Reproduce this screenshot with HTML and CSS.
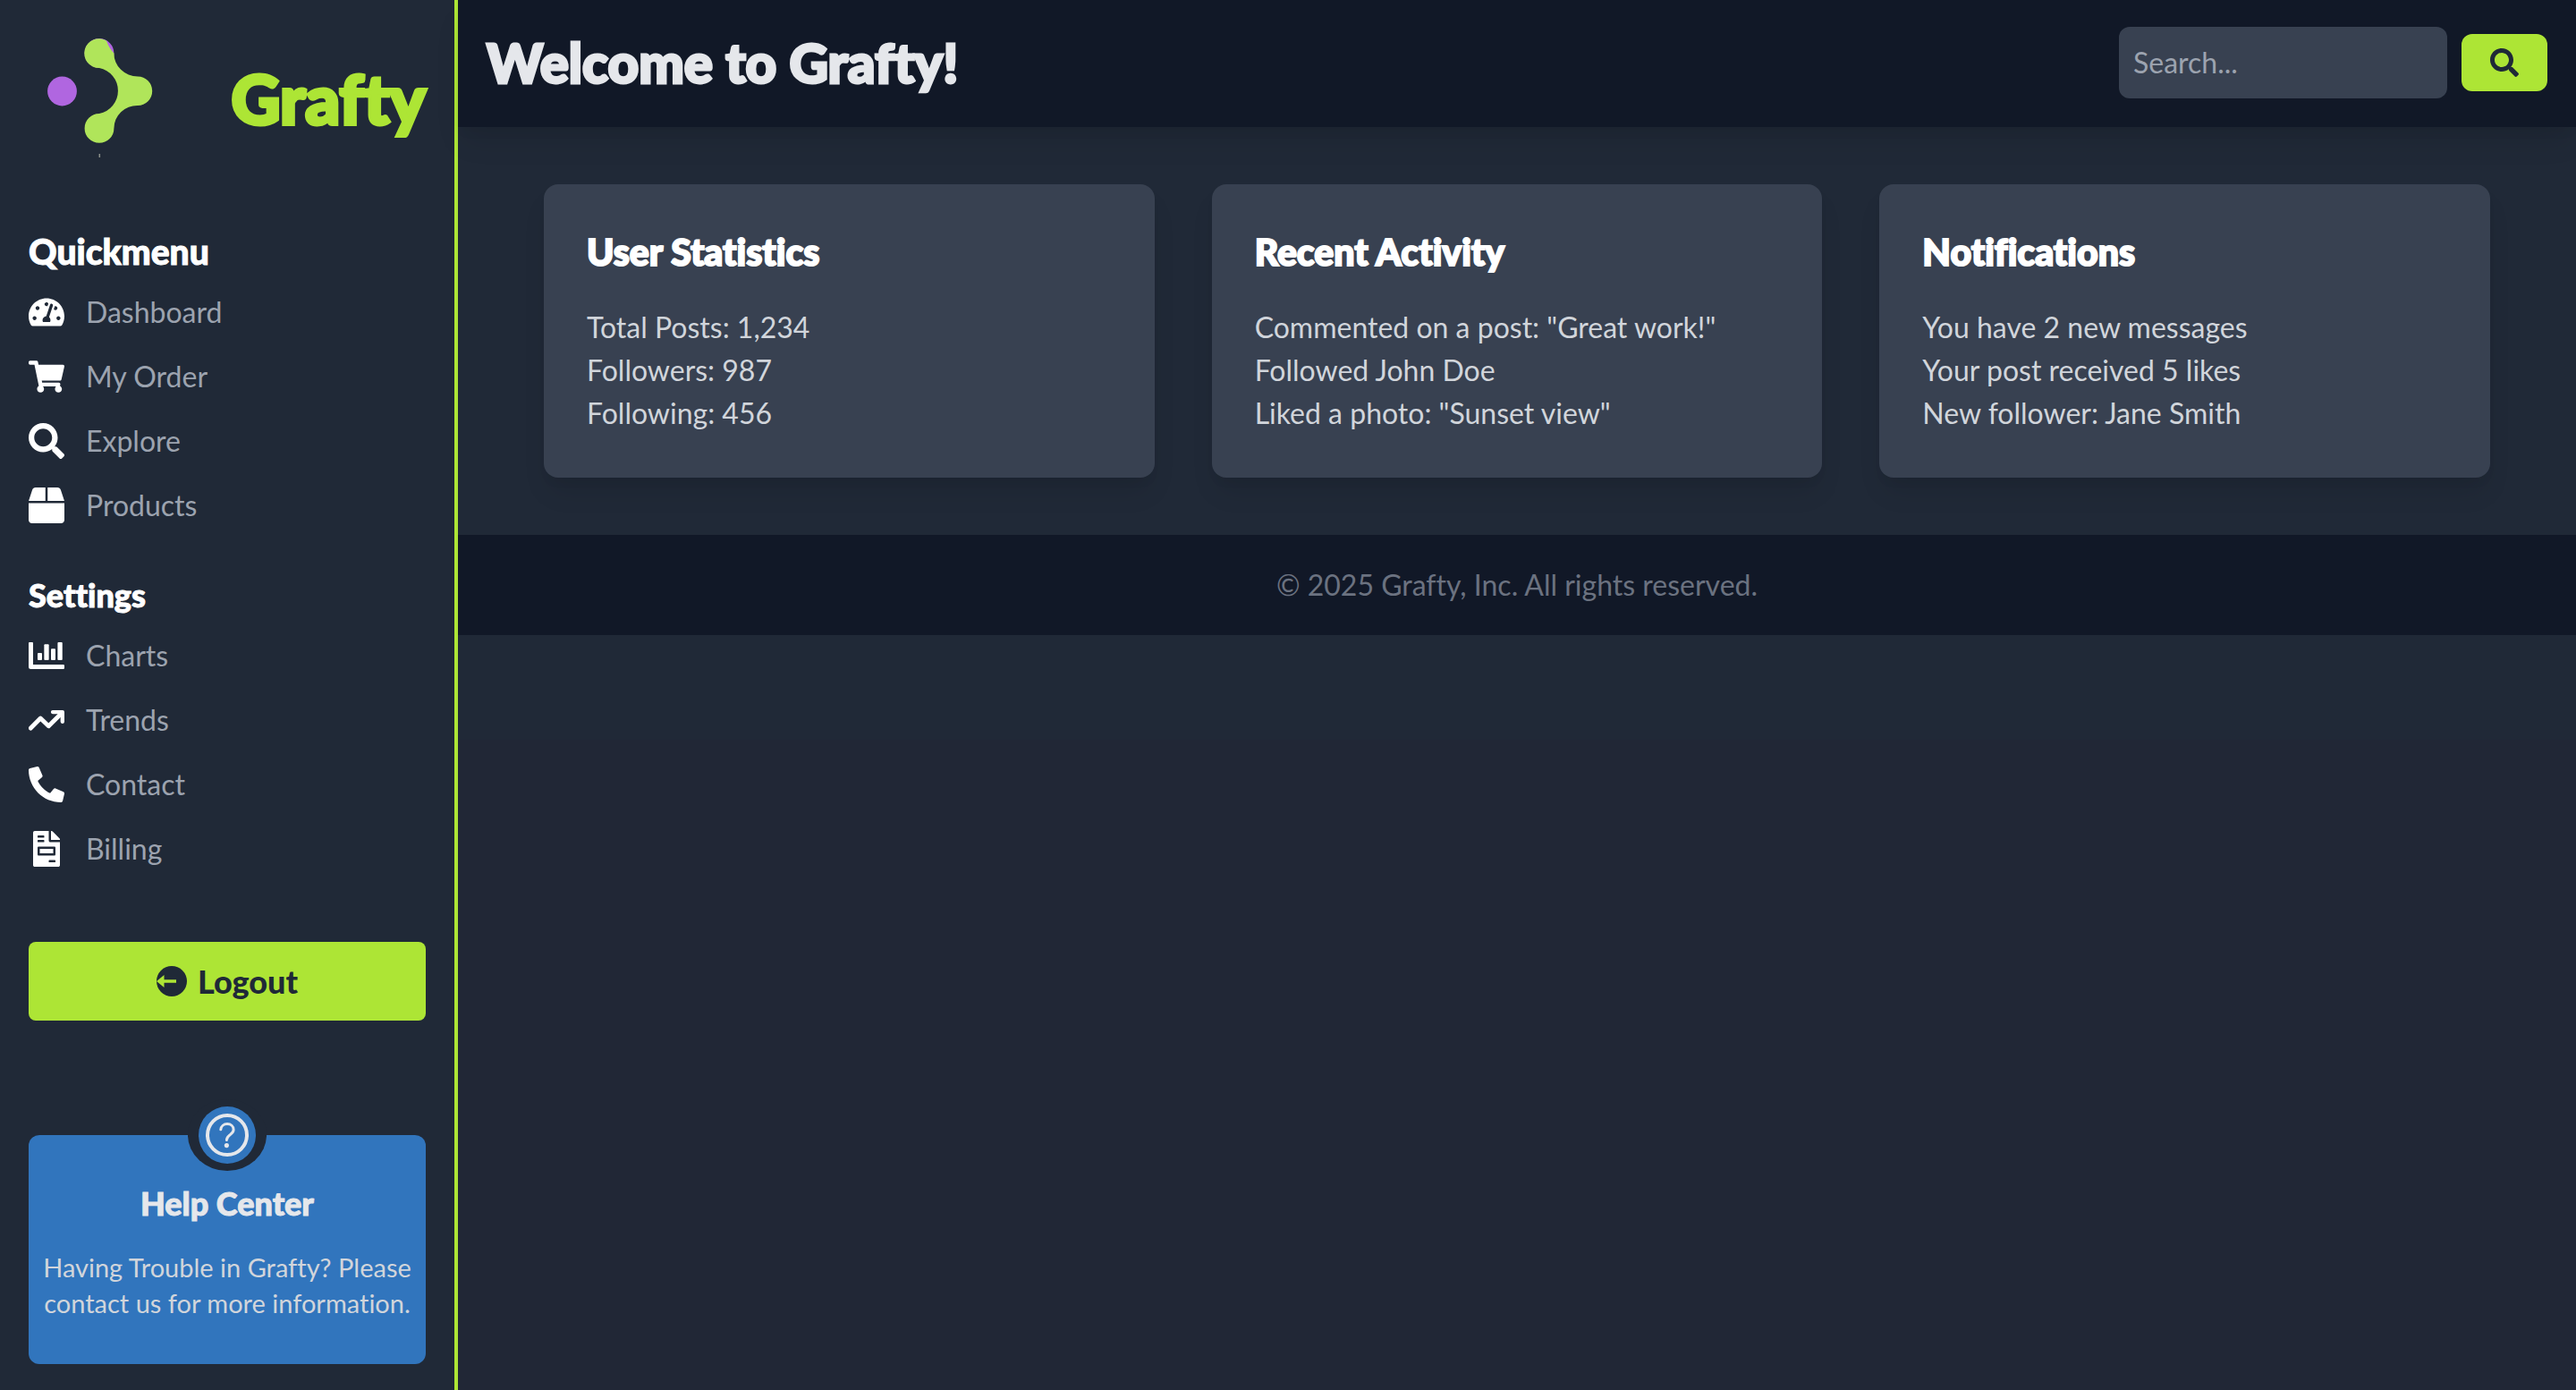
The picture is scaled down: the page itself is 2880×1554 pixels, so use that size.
FILE: index.html
```html
<!DOCTYPE html>
<html lang="en">
<head>
<meta charset="utf-8">
<meta name="viewport" content="width=device-width, initial-scale=1">
<title>Grafty</title>
<link rel="stylesheet" href="styles.css">
</head>
<body>
<div class="app">
  <aside class="sidebar">
    <div class="brand">
      <svg class="brand-logo" viewBox="32 30 160 160" aria-hidden="true">
        <circle cx="69.5" cy="102" r="16.4" fill="#b066e0"/>
        <circle cx="111" cy="59.5" r="16.4" fill="#b066e0"/>
        <path fill="#b0e55a" d="M119 45.5A16.4 16.4 0 1 0 111 76A26 26 0 0 1 111 127A16.4 16.4 0 1 0 127.4 143.4A26 25.5 0 0 1 154 118A16.2 16.2 0 0 0 154 85.6A27 26 0 0 1 127.4 59.5Q122 54 119 45.5Z"/>
        <path stroke="#8b8f8a" stroke-width="1.5" d="M111.3 172v4"/>
      </svg>
      <span class="brand-name">Grafty</span>
    </div>

    <nav class="menu" aria-label="Quickmenu">
      <h2 class="menu-title menu-title-large">Quickmenu</h2>
      <ul class="menu-list">
        <li><a class="menu-link" href="#dashboard">
          <svg class="icon" viewBox="0 0 576 512" aria-hidden="true"><path d="M288 32C128.94 32 0 160.94 0 320c0 52.8 14.25 102.26 39.06 144.8 5.61 9.62 16.3 15.2 27.44 15.2h443c11.14 0 21.83-5.58 27.44-15.2C561.75 422.26 576 372.8 576 320c0-159.06-128.94-288-288-288zm0 64c14.71 0 26.58 10.13 30.32 23.65-1.11 2.26-2.64 4.23-3.45 6.67l-9.22 27.67c-5.13 3.49-10.97 6.01-17.64 6.01-17.67 0-32-14.33-32-32S270.33 96 288 96zM96 384c-17.67 0-32-14.33-32-32s14.33-32 32-32 32 14.33 32 32-14.33 32-32 32zm48-160c-17.67 0-32-14.33-32-32s14.33-32 32-32 32 14.33 32 32-14.33 32-32 32zm246.77-72.41l-61.33 184C343.13 347.33 352 364.54 352 384c0 11.72-3.38 22.55-8.88 32H232.88c-5.5-9.45-8.88-20.28-8.88-32 0-33.94 26.5-61.43 59.9-63.59l61.34-184.01c4.17-12.56 17.73-19.45 30.36-15.17 12.57 4.19 19.35 17.79 15.17 30.36zm14.66 57.2l15.52-46.55c3.47-1.29 7.13-2.23 11.05-2.23 17.67 0 32 14.33 32 32s-14.33 32-32 32c-11.38-.01-20.89-6.28-26.57-15.22zM480 384c-17.67 0-32-14.33-32-32s14.33-32 32-32 32 14.33 32 32-14.33 32-32 32z"/></svg>
          Dashboard</a></li>
        <li><a class="menu-link" href="#orders">
          <svg class="icon" viewBox="0 0 576 512" aria-hidden="true"><path d="M528.12 301.319l47.273-208C578.806 78.301 567.391 64 551.99 64H159.208l-9.166-44.81C147.758 8.021 137.93 0 126.529 0H24C10.745 0 0 10.745 0 24v16c0 13.255 10.745 24 24 24h69.883l70.248 343.435C147.325 417.1 136 435.222 136 456c0 30.928 25.072 56 56 56s56-25.072 56-56c0-15.674-6.447-29.835-16.824-40h209.647C430.447 426.165 424 440.326 424 456c0 30.928 25.072 56 56 56s56-25.072 56-56c0-22.172-12.888-41.332-31.579-50.405l5.517-24.276c3.413-15.018-8.002-29.319-23.403-29.319H218.117l-6.545-32h293.145c11.206 0 20.92-7.754 23.403-18.681z"/></svg>
          My Order</a></li>
        <li><a class="menu-link" href="#explore">
          <svg class="icon" viewBox="0 0 512 512" aria-hidden="true"><path d="M505 442.7L405.3 343c-4.5-4.5-10.6-7-17-7H372c27.6-35.3 44-79.7 44-128C416 93.1 322.9 0 208 0S0 93.1 0 208s93.1 208 208 208c48.3 0 92.7-16.4 128-44v16.3c0 6.4 2.5 12.5 7 17l99.7 99.7c9.4 9.4 24.6 9.4 33.9 0l28.3-28.3c9.4-9.4 9.4-24.6.1-34zM208 336c-70.7 0-128-57.2-128-128 0-70.7 57.2-128 128-128 70.7 0 128 57.2 128 128 0 70.7-57.2 128-128 128z"/></svg>
          Explore</a></li>
        <li><a class="menu-link" href="#products">
          <svg class="icon" viewBox="0 0 512 512" aria-hidden="true"><path d="M509.5 184.6L458.9 32.8C452.4 13.2 434.1 0 413.4 0H272v192h238.7c-.4-2.5-.4-5-1.2-7.4zM240 0H98.6c-20.7 0-39 13.2-45.5 32.8L2.5 184.6c-.8 2.4-.8 4.9-1.2 7.4H240V0zM0 224v240c0 26.5 21.5 48 48 48h416c26.5 0 48-21.5 48-48V224H0z"/></svg>
          Products</a></li>
      </ul>
    </nav>

    <nav class="menu" aria-label="Settings">
      <h2 class="menu-title">Settings</h2>
      <ul class="menu-list">
        <li><a class="menu-link" href="#charts">
          <svg class="icon" viewBox="0 0 512 512" aria-hidden="true"><path d="M12 64h40q12 0 12 12v308h432q16 0 16 16v32q0 16-16 16H32q-32 0-32-32V76q0-12 12-12z"/><rect x="128" y="218" width="64" height="102" rx="12"/><rect x="222" y="92" width="68" height="228" rx="12"/><rect x="320" y="156" width="64" height="164" rx="12"/><rect x="415" y="64" width="68" height="256" rx="12"/></svg>
          Charts</a></li>
        <li><a class="menu-link" href="#trends">
          <svg class="icon" viewBox="0 0 512 512" aria-hidden="true"><path d="M30 372L170 230L286 342L470 160" fill="none" stroke="#fff" stroke-width="62" stroke-linecap="round" stroke-linejoin="round"/><path d="M344 114H486Q512 114 512 140V282Q508 306 486 306Q460 306 456 282V196L414 168H344Q318 164 318 140Q320 116 344 114Z"/></svg>
          Trends</a></li>
        <li><a class="menu-link" href="#contact">
          <svg class="icon" viewBox="0 0 512 512" aria-hidden="true"><path transform="matrix(-1 0 0 1 512 0)" d="M493.4 24.6l-104-24c-11.3-2.6-22.9 3.3-27.5 13.9l-48 112c-4.2 9.8-1.4 21.3 6.9 28l60.6 49.6c-36 76.7-98.9 140.5-177.2 177.2l-49.6-60.6c-6.8-8.3-18.2-11.1-28-6.9l-112 48C3.9 366.5-2 378.1.6 389.4l24 104C27.1 504.2 36.7 512 48 512c256.1 0 464-207.5 464-464 0-11.2-7.7-20.9-18.6-23.4z"/></svg>
          Contact</a></li>
        <li><a class="menu-link" href="#billing">
          <svg class="icon" viewBox="0 0 384 512" aria-hidden="true"><path d="M288 256H96v64h192v-64zm89-151L279.1 7c-4.5-4.5-10.6-7-17-7H256v128h128v-6.1c0-6.3-2.5-12.4-7-16.9zm-153 31V0H24C10.7 0 0 10.7 0 24v464c0 13.3 10.7 24 24 24h336c13.3 0 24-10.7 24-24V160H248c-13.2 0-24-10.8-24-24zM64 72c0-4.42 3.58-8 8-8h80c4.42 0 8 3.58 8 8v16c0 4.42-3.58 8-8 8H72c-4.42 0-8-3.58-8-8V72zm0 64c0-4.42 3.58-8 8-8h80c4.42 0 8 3.58 8 8v16c0 4.42-3.58 8-8 8H72c-4.42 0-8-3.58-8-8v-16zm256 304c0 4.42-3.58 8-8 8h-80c-4.42 0-8-3.58-8-8v-16c0-4.42 3.58-8 8-8h80c4.42 0 8 3.58 8 8v16zm0-200v96c0 8.84-7.16 16-16 16H80c-8.84 0-16-7.16-16-16v-96c0-8.84 7.16-16 16-16h224c8.84 0 16 7.16 16 16z"/></svg>
          Billing</a></li>
      </ul>
    </nav>

    <button class="logout" type="button">
      <svg class="logout-icon" viewBox="0 0 34 34" aria-hidden="true"><circle cx="17" cy="17" r="17" fill="#1f2937"/><path fill="#ade535" d="M0 17L8.5 10V15.2H22V18.8H8.5V24Z"/></svg>
      Logout
    </button>

    <section class="help">
      <div class="help-badge">
        <div class="help-disc">
          <svg class="help-icon" viewBox="0 0 48 48" fill="none" stroke="#e5e7eb" aria-hidden="true"><circle cx="24" cy="24" r="22" stroke-width="4"/><path d="M16.8 17.8C17.2 14 20.2 11.6 24 11.6C28 11.6 31.1 14.2 31.1 18C31.1 23.4 23.4 23.8 23.4 29.4" stroke-width="3" stroke-linecap="round"/><circle cx="23.4" cy="35.6" r="2.6" fill="#e5e7eb" stroke="none"/></svg>
        </div>
      </div>
      <h2 class="help-title">Help Center</h2>
      <p class="help-text">Having Trouble in Grafty? Please contact us for more information.</p>
    </section>
  </aside>

  <div class="content">
    <header class="topbar">
      <h1 class="page-title">Welcome to Grafty!</h1>
      <form class="search" role="search">
        <input class="search-input" type="text" placeholder="Search..." aria-label="Search">
        <button class="search-button" type="button" aria-label="Search">
          <svg class="search-icon" viewBox="0 0 512 512" aria-hidden="true"><path d="M505 442.7L405.3 343c-4.5-4.5-10.6-7-17-7H372c27.6-35.3 44-79.7 44-128C416 93.1 322.9 0 208 0S0 93.1 0 208s93.1 208 208 208c48.3 0 92.7-16.4 128-44v16.3c0 6.4 2.5 12.5 7 17l99.7 99.7c9.4 9.4 24.6 9.4 33.9 0l28.3-28.3c9.4-9.4 9.4-24.6.1-34zM208 336c-70.7 0-128-57.2-128-128 0-70.7 57.2-128 128-128 70.7 0 128 57.2 128 128 0 70.7-57.2 128-128 128z"/></svg>
        </button>
      </form>
    </header>

    <main class="cards">
      <section class="card">
        <h2 class="card-title">User Statistics</h2>
        <p>Total Posts: 1,234</p>
        <p>Followers: 987</p>
        <p>Following: 456</p>
      </section>
      <section class="card">
        <h2 class="card-title">Recent Activity</h2>
        <p>Commented on a post: "Great work!"</p>
        <p>Followed John Doe</p>
        <p>Liked a photo: "Sunset view"</p>
      </section>
      <section class="card">
        <h2 class="card-title">Notifications</h2>
        <p>You have 2 new messages</p>
        <p>Your post received 5 likes</p>
        <p>New follower: Jane Smith</p>
      </section>
    </main>

    <footer class="footer">© 2025 Grafty, Inc. All rights reserved.</footer>
  </div>
</div>
</body>
</html>
```
FILE: styles.css
```css
* {
  box-sizing: border-box;
}

body,
h1,
h2,
p,
ul {
  margin: 0;
}

body {
  background: #1f2937;
  font-family: Lato, "Open Sans", sans-serif;
  font-size: 32px;
  font-variant-ligatures: no-common-ligatures;
  line-height: 48px;
}

button,
input {
  border: 0;
  font: inherit;
}

button {
  cursor: pointer;
}

.app {
  display: flex;
  min-height: 100vh;
}

/* Sidebar */

.sidebar {
  flex: none;
  width: 512px;
  padding: 30px 32px;
  border-right: 4px solid #ade535;
  background: #202937;
}

.brand {
  display: flex;
  align-items: center;
  justify-content: space-between;
  margin-bottom: 63px;
}

.brand-logo {
  width: 160px;
  height: 160px;
}

.brand-name {
  color: #ade535;
  font-size: 76px;
  font-weight: 900;
  line-height: 80px;
  -webkit-text-stroke: 4px currentColor;
}

.menu {
  margin-bottom: 48px;
}

.menu-title {
  margin-bottom: 16px;
  color: #fff;
  font-size: 36px;
  font-weight: 900;
  line-height: 56px;
  -webkit-text-stroke: 1px currentColor;
}

.menu-title-large {
  font-size: 39px;
}

.menu-list {
  display: flex;
  flex-direction: column;
  gap: 24px;
  padding: 0;
  list-style: none;
}

.menu-link {
  display: flex;
  align-items: center;
  gap: 24px;
  color: #9ca3af;
  text-decoration: none;
}

.icon {
  width: 40px;
  height: 40px;
  fill: #fff;
}

.logout {
  display: flex;
  align-items: center;
  justify-content: center;
  gap: 12px;
  width: 100%;
  margin-top: 80px;
  padding: 20px;
  border-radius: 8px;
  background: #ade535;
  color: #1f2937;
  font-size: 36px;
  font-weight: 900;
}

.logout-icon {
  width: 34px;
  height: 34px;
}

.help {
  position: relative;
  margin-top: 128px;
  padding: 48px 8px;
  border-radius: 12px;
  background: #3175bd;
  text-align: center;
}

/* Badge straddling the top edge of the help card */
.help-badge {
  position: absolute;
  top: 0;
  left: 50%;
  padding: 8px 12px;
  border-radius: 50%;
  background: #202937;
  transform: translate(-50%, -50%);
}

.help-disc {
  display: flex;
  padding: 8px;
  border-radius: 50%;
  background: #3175bd;
}

.help-icon {
  width: 48px;
  height: 48px;
}

.help-title {
  margin-bottom: 24px;
  color: #e5e7eb;
  font-size: 36px;
  font-weight: 900;
  line-height: 56px;
  -webkit-text-stroke: 1px currentColor;
}

.help-text {
  color: #d1d5db;
  font-size: 29px;
  line-height: 40px;
}

/* Main column */

.content {
  flex: 1;
  min-width: 0;
  background: linear-gradient(#202937 827px, #212736 0);
}

.topbar {
  display: flex;
  align-items: center;
  justify-content: space-between;
  padding: 30px 32px 32px;
  background: #111827;
  box-shadow: 0 20px 30px -6px rgba(0, 0, 0, 0.1), 0 8px 12px -4px rgba(0, 0, 0, 0.05);
}

.page-title {
  color: #e5e7eb;
  font-size: 60px;
  font-weight: 900;
  line-height: 72px;
  -webkit-text-stroke: 3px currentColor;
}

.search {
  display: flex;
  align-items: center;
  gap: 16px;
}

.search-input {
  width: 367px;
  padding: 16px;
  border-radius: 12px;
  background: #384151;
  color: #e5e7eb;
  line-height: 48px;
}

.search-input::placeholder {
  color: #9ca3af;
  opacity: 1;
}

.search-button {
  display: flex;
  padding: 16px 32px;
  border-radius: 12px;
  background: #ade535;
}

.search-icon {
  width: 32px;
  height: 32px;
  fill: #1f2937;
}

.cards {
  display: grid;
  grid-template-columns: repeat(3, 1fr);
  gap: 64px;
  padding: 64px 96px;
}

.card {
  padding: 48px;
  border-radius: 16px;
  background: #384151;
  color: #d1d5db;
  box-shadow: 0 20px 30px -6px rgba(0, 0, 0, 0.1), 0 8px 12px -4px rgba(0, 0, 0, 0.05);
}

.card-title {
  margin-bottom: 32px;
  color: #fff;
  font-size: 41px;
  font-weight: 900;
  line-height: 56px;
  -webkit-text-stroke: 2px currentColor;
}

.footer {
  padding: 32px;
  background: #111827;
  color: #6b7280;
  text-align: center;
}
```
